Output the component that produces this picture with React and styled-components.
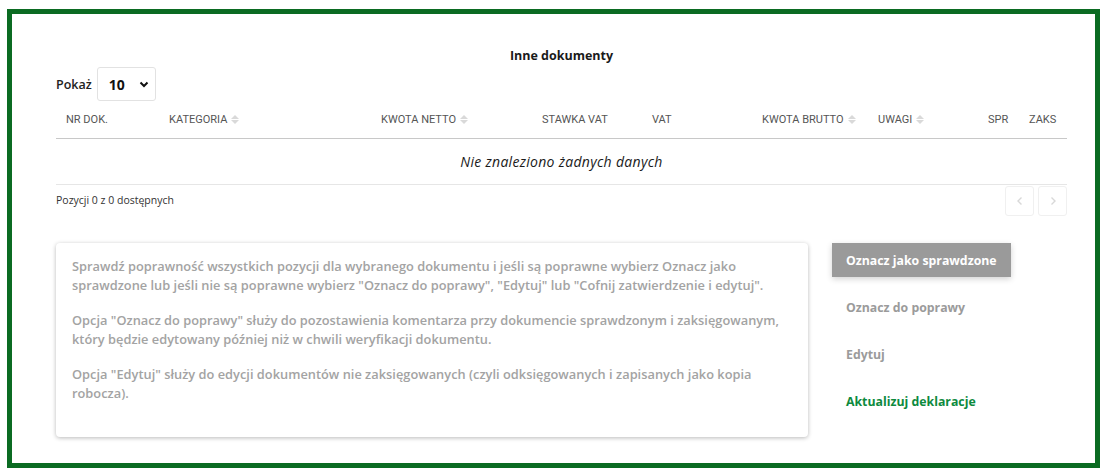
import React from 'react';
import styled, { createGlobalStyle } from 'styled-components';

const GlobalStyle = createGlobalStyle`
  html, body {
    margin: 0;
    padding: 0;
    background: #fff;
    font-family: "Open Sans", "Noto Sans", sans-serif;
  }
`;

const Frame = styled.div`
  box-sizing: border-box;
  margin: 9px 0 0 7px;
  width: 1093px;
  height: 459px;
  border: 5px solid #0b6b22;
  padding: 34px 28px 0 44px;
`;

const Title = styled.h2`
  margin: 0;
  height: 16px;
  line-height: 16px;
  text-align: center;
  font-size: 12.5px;
  font-weight: 700;
  color: #1a1a1a;
`;

const LengthRow = styled.div`
  display: flex;
  align-items: center;
  gap: 5px;
  margin-top: 3px;
  height: 34px;
  font-size: 12.5px;
  font-weight: 600;
  color: #222;
`;

const SelectBox = styled.div`
  box-sizing: border-box;
  width: 59px;
  height: 34px;
  border: 1px solid #e2e2e2;
  border-radius: 3px;
  display: flex;
  align-items: center;
  justify-content: space-between;
  padding: 0 6px 0 11px;
  font-size: 14px;
  font-weight: 700;
  color: #111;
`;

const Table = styled.table`
  width: 100%;
  border-collapse: collapse;
  table-layout: fixed;
  font-family: "Roboto", "Liberation Sans", sans-serif;
`;

const Th = styled.th`
  height: 37px;
  padding: 0 0 0 10px;
  text-align: left;
  font-size: 11px;
  font-weight: 400;
  color: #555;
  text-transform: uppercase;
  white-space: nowrap;
  border-bottom: 1px solid #c8c8c8;
  vertical-align: middle;
`;

const EmptyCell = styled.td`
  height: 45px;
  padding: 0;
  text-align: center;
  font-family: "Open Sans", "Noto Sans", sans-serif;
  font-style: italic;
  font-size: 14px;
  letter-spacing: 0.3px;
  color: #1a1a1a;
  border-bottom: 1px solid #e6e6e6;
`;

const SortIcon = styled.span`
  display: inline-flex;
  flex-direction: column;
  vertical-align: middle;
  margin-left: 4px;
  gap: 1px;
  margin-top: -2px;
`;

const Tri = styled.span`
  width: 0;
  height: 0;
  border-left: 4px solid transparent;
  border-right: 4px solid transparent;
  ${(p) => (p.$up ? 'border-bottom: 4px solid #d9d9d9;' : 'border-top: 4px solid #d9d9d9;')}
`;

const InfoRow = styled.div`
  display: flex;
  justify-content: space-between;
  align-items: center;
  height: 32px;
`;

const InfoText = styled.span`
  font-size: 10.5px;
  color: #333;
  margin-top: -2px;
`;

const Pager = styled.div`
  display: flex;
  gap: 4px;
`;

const PageBtn = styled.div`
  box-sizing: border-box;
  width: 29px;
  height: 30px;
  border: 1px solid #f0f0f0;
  border-radius: 3px;
  display: flex;
  align-items: center;
  justify-content: center;
  color: #d8d8d8;
`;

const Bottom = styled.div`
  display: flex;
  align-items: flex-start;
  gap: 24px;
  margin-top: 26px;
`;

const Card = styled.div`
  box-sizing: border-box;
  flex-shrink: 0;
  width: 752px;
  height: 194px;
  padding: 14px 16px;
  border-radius: 4px;
  background: #fff;
  box-shadow: 0 1px 4px rgba(0, 0, 0, 0.28);
`;

const Para = styled.p`
  margin: 0 0 16px;
  font-size: 12.8px;
  line-height: 19px;
  font-weight: 600;
  letter-spacing: 0.02px;
  white-space: nowrap;
  color: #a3a3a3;
`;

const Actions = styled.div`
  display: flex;
  flex-direction: column;
  gap: 13px;
`;

const Action = styled.div`
  box-sizing: border-box;
  height: 34px;
  display: flex;
  align-items: center;
  padding: 0 14px;
  font-size: 12.3px;
  font-weight: 700;
  white-space: nowrap;
  color: ${(p) => (p.$primary ? '#fff' : p.$green ? '#0d8a3e' : '#9b9b9b')};
  background: ${(p) => (p.$primary ? '#9a9a9a' : 'transparent')};
  box-shadow: ${(p) => (p.$primary ? '0 2px 6px rgba(0,0,0,0.18)' : 'none')};
  align-self: flex-start;
`;

const Sort = () => (
  <SortIcon>
    <Tri $up />
    <Tri />
  </SortIcon>
);

const columns = [
  { label: 'Nr dok.', width: 103 },
  { label: 'Kategoria', width: 212, sort: true },
  { label: 'Kwota netto', width: 161, sort: true },
  { label: 'Stawka VAT', width: 110 },
  { label: 'VAT', width: 110 },
  { label: 'Kwota brutto', width: 116, sort: true },
  { label: 'Uwagi', width: 110, sort: true },
  { label: 'Spr', width: 41 },
  { label: 'Zaks', width: 48 },
];

const Chevron = ({ dir }) => (
  <svg width="8" height="10" viewBox="0 0 8 10" fill="none" stroke="currentColor" strokeWidth="1.4">
    {dir === 'left' ? <path d="M5.5 1.5 L2 5 L5.5 8.5" /> : <path d="M2.5 1.5 L6 5 L2.5 8.5" />}
  </svg>
);

export default function App() {
  return (
    <>
      <GlobalStyle />
      <Frame>
        <Title>Inne dokumenty</Title>
        <LengthRow>
          Pokaż
          <SelectBox>
            10
            <svg width="10" height="7" viewBox="0 0 10 7" fill="none" stroke="#111" strokeWidth="2">
              <path d="M1.5 1.5 L5 5 L8.5 1.5" />
            </svg>
          </SelectBox>
        </LengthRow>
        <Table>
          <colgroup>
            {columns.map((c) => (
              <col key={c.label} style={{ width: c.width }} />
            ))}
          </colgroup>
          <thead>
            <tr>
              {columns.map((c) => (
                <Th key={c.label}>
                  {c.label}
                  {c.sort && <Sort />}
                </Th>
              ))}
            </tr>
          </thead>
          <tbody>
            <tr>
              <EmptyCell colSpan={columns.length}>Nie znaleziono żadnych danych</EmptyCell>
            </tr>
          </tbody>
        </Table>
        <InfoRow>
          <InfoText>Pozycji 0 z 0 dostępnych</InfoText>
          <Pager>
            <PageBtn><Chevron dir="left" /></PageBtn>
            <PageBtn><Chevron dir="right" /></PageBtn>
          </Pager>
        </InfoRow>
        <Bottom>
          <Card>
            <Para>
              Sprawdź poprawność wszystkich pozycji dla wybranego dokumentu i jeśli są poprawne wybierz Oznacz jako
              <br />
              sprawdzone lub jeśli nie są poprawne wybierz "Oznacz do poprawy", "Edytuj" lub "Cofnij zatwierdzenie i edytuj".
            </Para>
            <Para>
              Opcja "Oznacz do poprawy" służy do pozostawienia komentarza przy dokumencie sprawdzonym i zaksięgowanym,
              <br />
              który będzie edytowany później niż w chwili weryfikacji dokumentu.
            </Para>
            <Para>
              Opcja "Edytuj" służy do edycji dokumentów nie zaksięgowanych (czyli odksięgowanych i zapisanych jako kopia
              <br />
              robocza).
            </Para>
          </Card>
          <Actions>
            <Action $primary>Oznacz jako sprawdzone</Action>
            <Action>Oznacz do poprawy</Action>
            <Action>Edytuj</Action>
            <Action $green>Aktualizuj deklaracje</Action>
          </Actions>
        </Bottom>
      </Frame>
    </>
  );
}
